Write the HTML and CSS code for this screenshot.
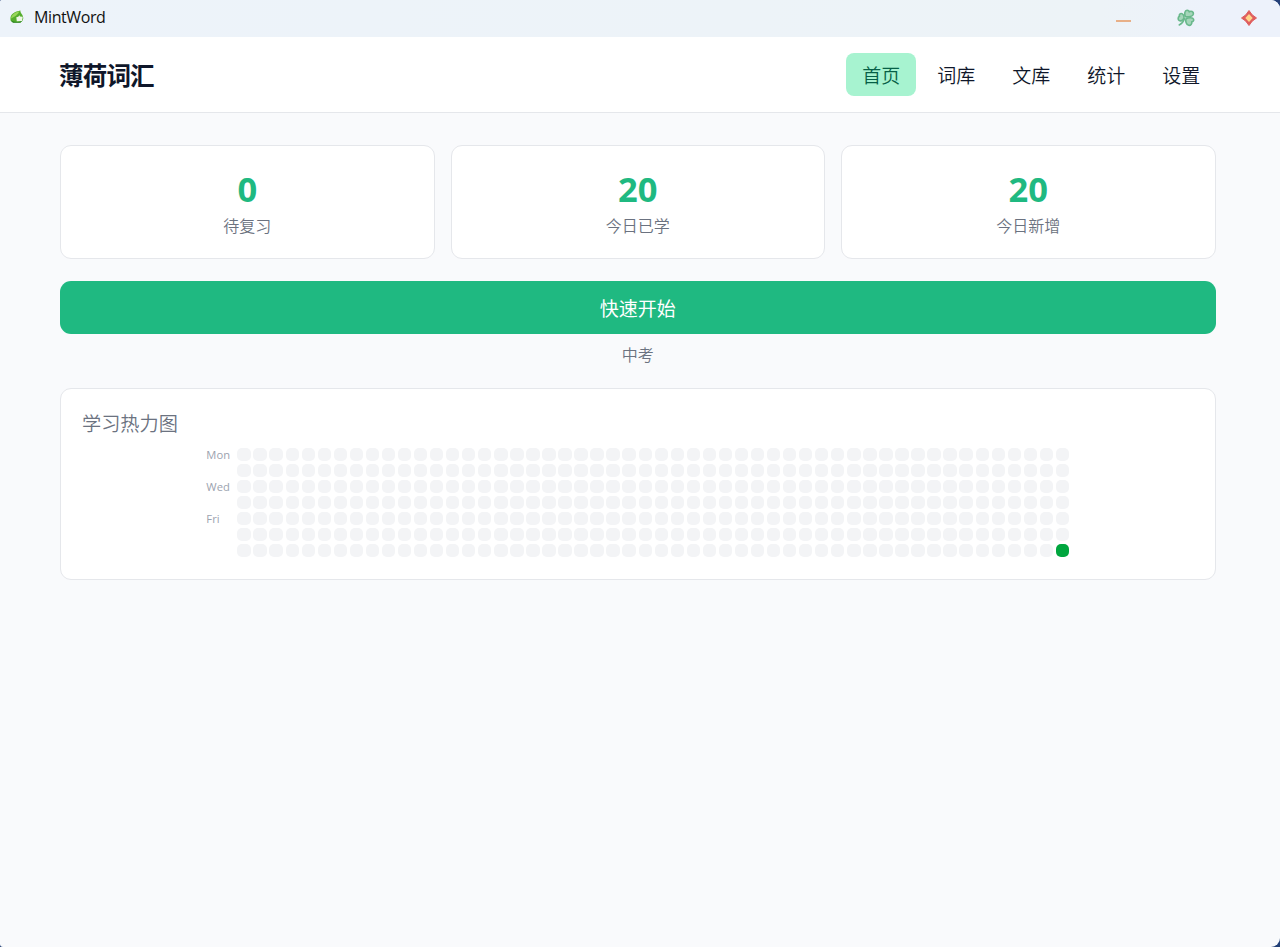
FILE: index.html
```html
<!DOCTYPE html>
<html lang="zh-CN">
<head>
  <meta charset="UTF-8" />
  <meta name="viewport" content="width=device-width, initial-scale=1.0"/>
  <title>MintWord</title>
  <link rel="stylesheet" href="styles.css">
</head>
<body>

  <div class="window">
    <div class="titlebar">
      <svg class="app-icon" width="14" height="14" viewBox="0 0 14 14">
        <path d="M.8 11 C-1 5 4 1.5 10.5 .5 C9.8 3 12.5 4 13 6.5 C14 10 12 12.5 9 12.5 L3 12.5 Z" fill="#55ad2d"/>
        <path d="M1 8.5 C1.5 4.5 5 2 9.5 1.2 C8 4.5 5 6.5 1 8.5 Z" fill="#98d65a"/>
        <path d="M.8 10.5 C4 12 8 12.5 12 11 L10.5 12.8 L3 12.8 Z" fill="#2e8423"/>
        <path d="M6.3 7.2 L8.3 6.8 L9.3 5.2 L10 6.6 L12.8 6.8 L12 11 L6.8 11.3 Z" fill="#edf7e6"/>
      </svg>
      <span class="app-name">MintWord</span>
      <div class="window-controls">
        <span class="control minimize"></span>
        <span class="control">
          <svg width="18" height="18" viewBox="0 0 18 18" fill="#a5d6ba" stroke="#69b88b" stroke-width="1.6" stroke-linejoin="round" stroke-linecap="round">
            <path d="M8.3 7.6 C7.1 4.5 7.8 1.4 10 1.3 C11.6 1.2 12.2 2.3 12.2 2.9 C14 1.6 16.7 2.7 16.4 5 C16.1 7.6 11.5 8.4 8.3 7.6 Z"/>
            <path d="M9 9.8 C11.5 8.4 15.9 8.4 16.6 10.3 C17.2 12 15.4 13 14.7 12.9 C15.2 14.8 13.7 16.8 11.6 16.3 C9.2 15.7 8.3 12.3 9 9.8 Z"/>
            <path d="M7 9.2 C7.2 6.5 5.9 4.4 4.1 4.5 C2.4 4.6 2 6.3 2.5 7.3 C.9 8 .6 10.6 2.2 11.5 C4.1 12.5 6 11.1 7 9.2 Z"/>
            <path d="M7.4 9.8 C6.6 12.5 5 14.6 2.2 16" fill="none"/>
          </svg>
        </span>
        <span class="control">
          <svg width="18" height="18" viewBox="0 0 18 18">
            <path d="M9 1.5 Q11.6 6.4 16.5 9 Q11.6 11.6 9 16.5 Q6.4 11.6 1.5 9 Q6.4 6.4 9 1.5 Z" fill="#df5e5e" stroke="#df5e5e" stroke-width="1" stroke-linejoin="round"/>
            <path d="M9 5 L12.7 9 L9 13 L5.3 9 Z" fill="#ffd58a"/>
          </svg>
        </span>
      </div>
    </div>

    <header class="header">
      <h1 class="brand">薄荷词汇</h1>
      <nav class="nav">
        <a class="nav-item active">首页</a>
        <a class="nav-item">词库</a>
        <a class="nav-item">文库</a>
        <a class="nav-item">统计</a>
        <a class="nav-item">设置</a>
      </nav>
    </header>

    <main class="content">
      <div class="stats">
        <div class="stat-card">
          <div class="stat-value">0</div>
          <div class="stat-label">待复习</div>
        </div>
        <div class="stat-card">
          <div class="stat-value">20</div>
          <div class="stat-label">今日已学</div>
        </div>
        <div class="stat-card">
          <div class="stat-value">20</div>
          <div class="stat-label">今日新增</div>
        </div>
      </div>

      <button class="start-btn">快速开始</button>
      <p class="book-name">中考</p>

      <section class="heatmap-card">
        <h2 class="heatmap-title">学习热力图</h2>
        <div class="heatmap">
          <div class="days">
            <span>Mon</span><span></span><span>Wed</span><span></span><span>Fri</span><span></span><span></span>
          </div>
          <div class="cells" id="cells"></div>
        </div>
      </section>
    </main>
  </div>

  <script src="script.js"></script>
</body>
</html>
```
FILE: styles.css
```css
* {
  box-sizing: border-box;
}

body {
  margin: 0;
  background-color: #234078;
  font-family: "Open Sans", "Noto Sans CJK SC", sans-serif;
  color: #0f172a;
}

.window {
  height: 947px;
  overflow: hidden;
  background-color: #f9fafc;
  border-radius: 2px 9px 9px 3px;
}

.titlebar {
  display: flex;
  align-items: center;
  height: 37px;
  padding-left: 10px;
  background: linear-gradient(90deg, #edf3fa 0%, #edf3f7 86%, #edf2fb 95%);
}

.app-icon {
  margin-top: -4px;
}

.app-name {
  margin: -4px 0 0 10px;
  font-size: 16px;
  letter-spacing: -0.4px;
  color: #111;
}

.window-controls {
  display: flex;
  margin-left: auto;
}

.control {
  display: flex;
  align-items: center;
  justify-content: center;
  width: 62.5px;
  height: 37px;
  padding-bottom: 1px;
}

.minimize::before {
  content: "";
  width: 15px;
  height: 2px;
  margin-top: 5px;
  background-color: #e8b088;
}

.header {
  display: flex;
  align-items: center;
  justify-content: space-between;
  height: 76px;
  padding: 0 64px 0 59px;
  background-color: #fff;
  border-bottom: 1px solid #e5e7eb;
}

.brand {
  margin: 0;
  font-size: 24.5px;
  font-weight: 700;
  letter-spacing: -0.8px;
}

.nav {
  display: flex;
  gap: 5.4px;
}

.nav-item {
  width: 69.6px;
  height: 43px;
  line-height: 46px;
  border-radius: 8px;
  font-size: 19px;
  font-weight: 350;
  text-align: center;
}

.nav-item.active {
  background-color: #a7f3d0;
  color: #065f46;
}

.content {
  padding: 32px 64.5px 0 60px;
}

.stats {
  display: grid;
  grid-template-columns: repeat(3, 1fr);
  gap: 16px;
}

.stat-card {
  height: 114px;
  padding-top: 19px;
  background-color: #fff;
  border: 1px solid #e5e7eb;
  border-radius: 11px;
  text-align: center;
}

.stat-value {
  height: 48px;
  line-height: 48px;
  font-size: 34.5px;
  font-weight: 700;
  color: #1fb981;
}

.stat-label {
  line-height: 27px;
  font-size: 16px;
  font-weight: 350;
  color: #6b7280;
}

.start-btn {
  display: block;
  width: 100%;
  height: 53px;
  margin-top: 22px;
  padding: 1px 0 0;
  border: none;
  border-radius: 11px;
  background-color: #1fb981;
  color: #fff;
  font-family: inherit;
  font-size: 19px;
  font-weight: 400;
}

.book-name {
  margin: 9px 0 0;
  line-height: 24px;
  font-size: 16px;
  font-weight: 350;
  color: #6b7280;
  text-align: center;
}

.heatmap-card {
  height: 191.5px;
  margin-top: 21px;
  padding: 20px 21px;
  background-color: #fff;
  border: 1px solid #e5e7eb;
  border-radius: 11px;
}

.heatmap-title {
  margin: 0 0 9.5px;
  line-height: 29px;
  font-size: 19.2px;
  font-weight: 350;
  color: #6b7280;
}

.heatmap {
  display: flex;
  justify-content: center;
  gap: 7px;
}

.days {
  width: 24px;
  font-size: 11.2px;
  color: #9ca3af;
}

.days span {
  display: block;
  height: 16.06px;
  line-height: 14px;
}

.cells {
  display: grid;
  grid-template-columns: repeat(52, 13.4px);
  grid-template-rows: repeat(7, 13.4px);
  grid-auto-flow: column;
  gap: 2.66px;
}

.cell {
  border-radius: 5px;
  background-color: #f3f4f6;
}

.cell.learned {
  background-color: #00a63e;
}
```
FILE: script.js
```javascript
const cells = document.getElementById("cells");
const total = 52 * 7;

for (let i = 0; i < total; i++) {
  const cell = document.createElement("div");
  cell.className = "cell";
  // today is always the last cell
  if (i === total - 1) {
    cell.classList.add("learned");
  }
  cells.appendChild(cell);
}
```
